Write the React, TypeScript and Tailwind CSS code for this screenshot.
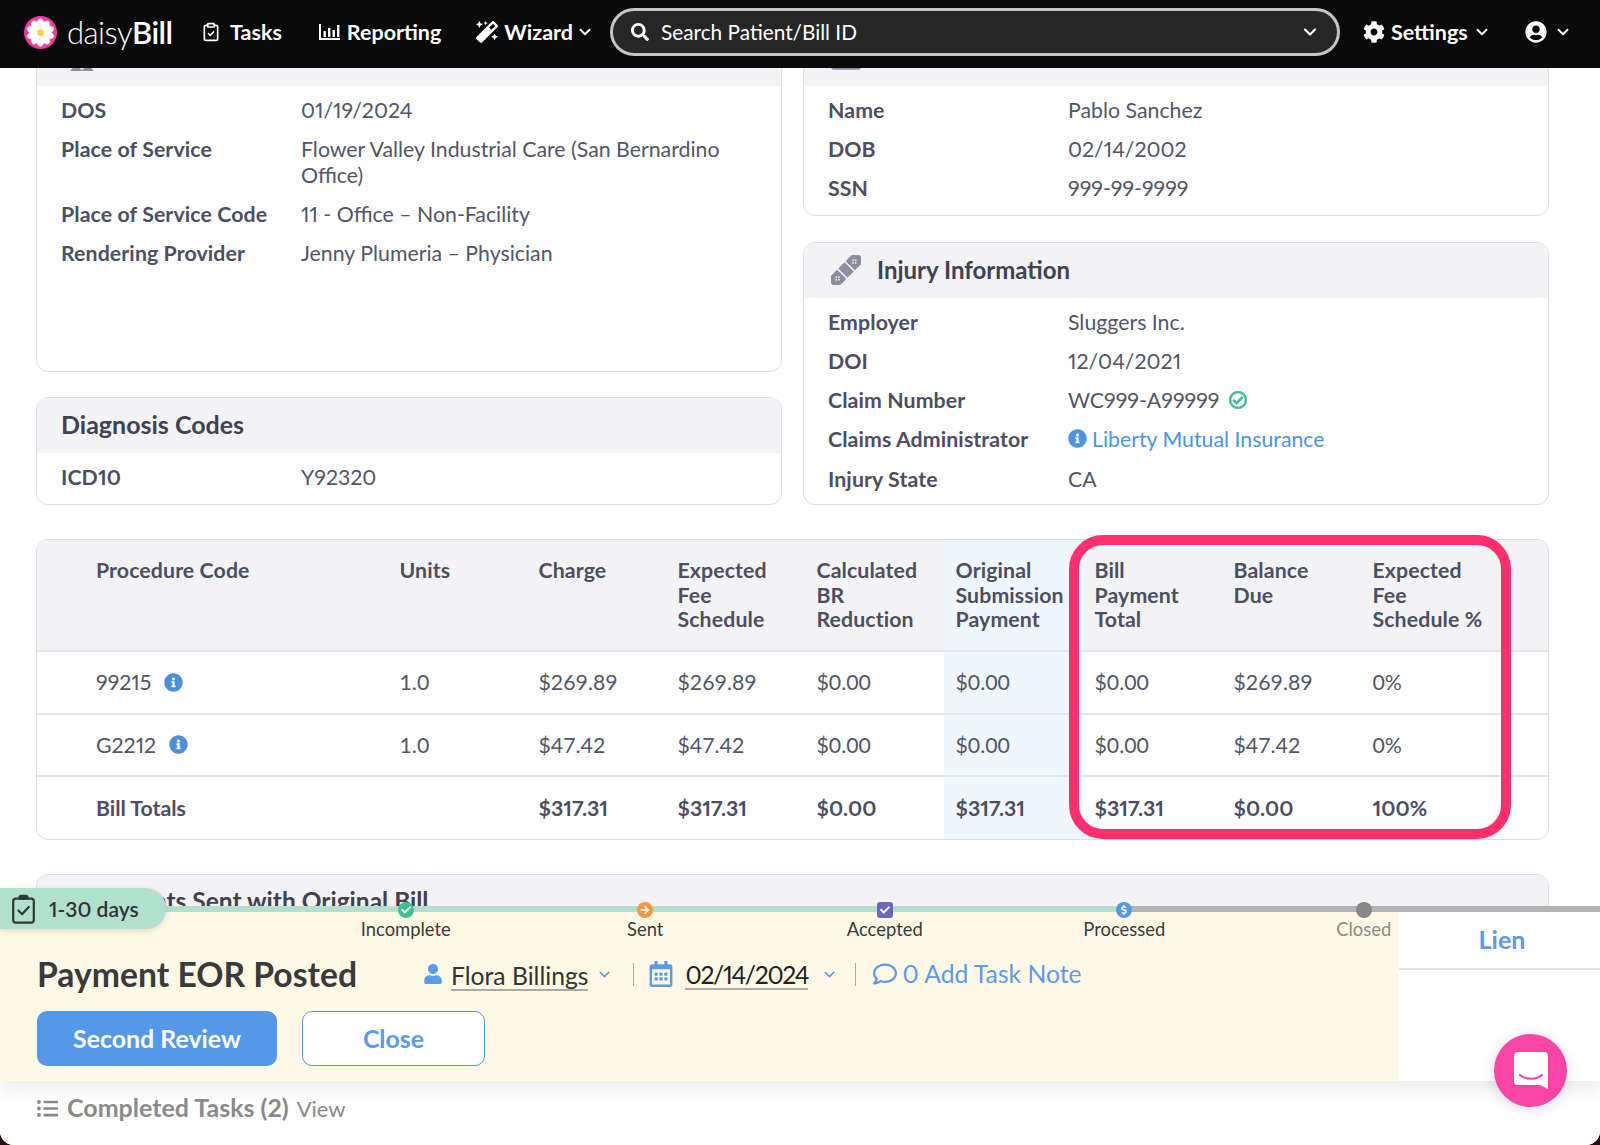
import { ChevronDown, ClipboardCheck } from "lucide-react";
import {
  FaArrowRight,
  FaCheck,
  FaCog,
  FaDollarSign,
  FaHospital,
  FaIdCard,
  FaInfoCircle,
  FaListUl,
  FaMagic,
  FaRegCalendarAlt,
  FaRegCheckCircle,
  FaRegComment,
  FaSearch,
  FaUser,
  FaUserCircle,
} from "react-icons/fa";
import type { ReactNode } from "react";

function Flower() {
  const petals = [0, 36, 72, 108, 144, 180, 216, 252, 288, 324];
  return (
    <svg width="33" height="33" viewBox="0 0 33 33" className="shrink-0">
      <circle cx="16.5" cy="16.5" r="16.5" fill="#f5399d" />
      {petals.map((deg) => (
        <ellipse key={deg} cx="16.5" cy="8.6" rx="3.7" ry="6" fill="#fff" stroke="#fbd5e8" strokeWidth="0.5" transform={`rotate(${deg} 16.5 16.5)`} />
      ))}
      <circle cx="16.5" cy="16.5" r="3.2" fill="#fbd32d" />
    </svg>
  );
}

function ReportIcon() {
  return (
    <svg width="21" height="18" viewBox="0 0 21 18" fill="#fff" className="shrink-0">
      <rect x="0" y="1" width="2" height="16" />
      <rect x="0" y="15" width="21" height="2" />
      <rect x="4.5" y="8" width="2.4" height="6" />
      <rect x="9" y="5" width="2.4" height="9" />
      <rect x="13.5" y="7" width="2.4" height="7" />
      <rect x="18" y="2" width="2.4" height="12" />
    </svg>
  );
}

function BadgeClipboard() {
  return (
    <svg width="23" height="30" viewBox="0 0 23 30" fill="none" stroke="#2f3a36" strokeWidth="2.2" className="shrink-0">
      <rect x="1.2" y="4.6" width="20.6" height="24" rx="2.6" />
      <path d="M7.5 4.6V3.4a1.6 1.6 0 0 1 1.6-1.6h4.8a1.6 1.6 0 0 1 1.6 1.6v1.2z" fill="#2f3a36" />
      <path d="M6.5 16.5l3.6 3.8 6.6-7.4" strokeLinecap="round" strokeLinejoin="round" />
    </svg>
  );
}

function BandageIcon() {
  const dots = [
    [0, 13.2],
    [0, 16.8],
    [-2, 15],
    [2, 15],
  ];
  return (
    <svg width="30" height="30" viewBox="0 0 30 30" className="ml-[3px] shrink-0">
      <g transform="rotate(-45 15 15)">
        <rect x="-5" y="8.5" width="40" height="13" rx="6.5" fill="#8b8e9c" />
        <rect x="9" y="7.5" width="1.6" height="15" fill="#f3f3f6" />
        <rect x="19.4" y="7.5" width="1.6" height="15" fill="#f3f3f6" />
        {dots.map(([dx, y]) => (
          <g key={`${dx}-${y}`} fill="#f3f3f6">
            <circle cx={3 + dx} cy={y} r="0.9" />
            <circle cx={27 + dx} cy={y} r="0.9" />
          </g>
        ))}
      </g>
    </svg>
  );
}

function Chevron({ className }: { className: string }) {
  return <ChevronDown className={className} strokeWidth={2.5} />;
}

function TopNav() {
  return (
    <nav className="relative z-10 flex h-[68px] items-center bg-[#0a0a0a] pb-[4px] pl-[24px] text-[21.5px] font-bold text-white">
      <Flower />
      <span className="ml-[10px] w-[107px] text-[31px] font-light tracking-[-0.5px]">
        daisy<span className="font-semibold">Bill</span>
      </span>
      <ClipboardCheck className="ml-[27px] h-[20px] w-[20px]" />
      <span className="ml-[9px]">Tasks</span>
      <span className="ml-[37px]">
        <ReportIcon />
      </span>
      <span className="ml-[7px]">Reporting</span>
      <FaMagic className="ml-[35px] text-[22px]" />
      <span className="ml-[6px]">Wizard</span>
      <Chevron className="ml-[3px] h-[18px] w-[18px]" />
      <div className="ml-[16px] flex h-[48px] w-[730px] items-center rounded-full border-[3px] border-[#c4c4c4] bg-[#262626] pl-[18px] pr-[17px] font-normal">
        <FaSearch className="text-[18px]" />
        <span className="ml-[12px] flex-1 text-[20.8px]">Search Patient/Bill ID</span>
        <Chevron className="h-[20px] w-[20px]" />
      </div>
      <FaCog className="ml-[23px] text-[22px]" />
      <span className="ml-[6px]">Settings</span>
      <Chevron className="ml-[5px] h-[18px] w-[18px]" />
      <FaUserCircle className="ml-[34px] text-[22px]" />
      <Chevron className="ml-[7px] h-[18px] w-[18px]" />
    </nav>
  );
}

function Card({ title, icon, children, className = "" }: { title?: string; icon?: ReactNode; children: ReactNode; className?: string }) {
  return (
    <section className={`overflow-hidden rounded-[12px] border border-[#dcdde1] bg-white ${className}`}>
      <header className="flex h-[55px] items-center gap-[16px] bg-[#f3f3f6] pb-[2px] pl-[24px] font-bold text-[#3f4250]">
        {icon}
        {title}
      </header>
      <div className="pb-[6px] pt-[4px]">{children}</div>
    </section>
  );
}

function InfoRow({ label, children }: { label: string; children: ReactNode }) {
  return (
    <div className="flex min-h-[39px] items-start px-[24px] py-[6.5px] text-[21.3px] leading-[26px]">
      <div className="w-[240px] shrink-0 font-bold tracking-[0.1px] text-[#4c4f5f]">{label}</div>
      <div className="text-[#535665]">{children}</div>
    </div>
  );
}

const cols = [
  { title: ["Units"] },
  { title: ["Charge"] },
  { title: ["Expected", "Fee", "Schedule"] },
  { title: ["Calculated", "BR", "Reduction"] },
  { title: ["Original", "Submission", "Payment"] },
  { title: ["Bill", "Payment", "Total"] },
  { title: ["Balance", "Due"] },
  { title: ["Expected", "Fee", "Schedule %"] },
];

const rows = [
  { code: "99215", cells: ["1.0", "$269.89", "$269.89", "$0.00", "$0.00", "$0.00", "$269.89", "0%"] },
  { code: "G2212", cells: ["1.0", "$47.42", "$47.42", "$0.00", "$0.00", "$0.00", "$47.42", "0%"] },
  { code: "Bill Totals", cells: ["", "$317.31", "$317.31", "$0.00", "$317.31", "$317.31", "$0.00", "100%"] },
];

function ProcedureTable() {
  return (
    <div className="relative mt-[34px]">
      <div className="overflow-hidden rounded-[12px] border border-[#dcdde1] bg-white">
        <table className="w-full table-fixed text-left text-[21.3px] leading-[24.5px]">
          <thead>
            <tr className="h-[111px] bg-[#f3f3f6] align-top text-[#4c4f5f]">
              <th className="w-[350.5px] pl-[59px] pt-[18px] font-bold tracking-[0.1px]">Procedure Code</th>
              {cols.map((col, i) => (
                <th key={i} className={`w-[139px] whitespace-nowrap pl-[12px] pt-[18px] font-bold tracking-[0.1px] ${i === 4 ? "bg-[#eff7fe]" : ""}`}>
                  {col.title.map((line) => (
                    <div key={line}>{line}</div>
                  ))}
                </th>
              ))}
              <th />
            </tr>
          </thead>
          <tbody className="text-[#535665]">
            {rows.map((row, r) => (
              <tr key={row.code} className={`h-[62.5px] border-t-[2px] border-[#e4e5e8] ${r === 2 ? "font-bold text-[#4c4f5f]" : ""}`}>
                <td className="pl-[59px]">
                  <span className="inline-flex items-center gap-[13px]">
                    {row.code}
                    {r < 2 && <FaInfoCircle className="text-[19px] text-[#4c8fdc]" />}
                  </span>
                </td>
                {row.cells.map((cell, i) => (
                  <td key={i} className={`pl-[12px] ${r < 2 ? "tabular-nums" : ""} ${i === 4 ? "bg-[#eff7fe]" : ""}`}>
                    {cell}
                  </td>
                ))}
                <td />
              </tr>
            ))}
          </tbody>
        </table>
      </div>
      {/* pink highlight drawn over the last three columns */}
      <div className="pointer-events-none absolute left-[1033px] top-[-4px] h-[304px] w-[442px] rounded-[34px] border-[10px] border-[#ff2e6c]" />
    </div>
  );
}

function StepDot({ children, className }: { children?: ReactNode; className: string }) {
  return <div className={`flex h-[16px] w-[16px] items-center justify-center text-[10px] text-white ${className}`}>{children}</div>;
}

const steps = [
  { label: "Incomplete", dot: <StepDot className="rounded-full bg-[#3cc08f]"><FaCheck /></StepDot> },
  { label: "Sent", dot: <StepDot className="rounded-full bg-[#f59a3c]"><FaArrowRight /></StepDot> },
  { label: "Accepted", dot: <StepDot className="rounded-[3px] bg-[#6d65c0]"><FaCheck /></StepDot> },
  { label: "Processed", dot: <StepDot className="rounded-full bg-[#5498e8]"><FaDollarSign /></StepDot> },
  { label: "Closed", dot: <StepDot className="rounded-full bg-[#888888]" />, muted: true },
];

function TaskFooter() {
  return (
    <div className="absolute inset-x-0 bottom-0 z-20 h-[239px] bg-white">
      {/* progress track */}
      <div className="flex h-[6px]">
        <div className="w-[1125px] bg-[#b2e0cf]" />
        <div className="flex-1 bg-[#b3b3b3]" />
      </div>

      <div className="flex h-[169px] shadow-[0_8px_16px_rgba(0,0,0,0.08)]">
        <div className="w-[1399px] bg-[#fef9e5] pl-[37px] pt-[38px]">
          <div className="flex h-[48px] items-center text-[24.7px]">
            <h2 className="w-[386px] text-[33.7px] font-bold text-[#3a3a3a]">Payment EOR Posted</h2>
            <FaUser className="text-[20px] text-[#5b9bea]" />
            <span className="ml-[8px] mt-[4px] border-b-[2px] border-[#aaaaaa] leading-[27px] text-[#333333]">Flora Billings</span>
            <ChevronDown className="ml-[8px] h-[17px] w-[17px] text-[#5b9bea]" />
            <div className="ml-[20px] h-[23px] w-px bg-[#aaaaaa]" />
            <FaRegCalendarAlt className="ml-[14px] text-[26px] text-[#5b9bea]" />
            <span className="ml-[11px] mt-[2px] w-[123px] whitespace-nowrap border-b-[2px] border-[#aaaaaa] leading-[27px] tracking-[-1.3px] text-[#222222]">02/14/2024</span>
            <ChevronDown className="ml-[13px] h-[17px] w-[17px] text-[#5b9bea]" />
            <div className="ml-[17px] h-[23px] w-px bg-[#aaaaaa]" />
            <FaRegComment className="ml-[17px] text-[24px] text-[#5b9bea]" />
            <span className="ml-[5px] text-[#5b9bea]">0 Add Task Note</span>
          </div>
          <div className="mt-[13px] flex gap-[25px] text-[24.9px] font-bold">
            <button className="h-[55px] w-[240px] rounded-[10px] bg-[#5498e8] text-white">Second Review</button>
            <button className="h-[55px] w-[183px] rounded-[10px] border-[1.5px] border-[#5498e8] bg-white text-[#5b9bea]">Close</button>
          </div>
        </div>
        <div className="flex-1">
          <div className="flex h-[58px] items-center justify-center border-b-[2px] border-[#e2e2e2] pl-[5px] text-[25px] font-bold text-[#5b9bea]">
            Lien
          </div>
        </div>
      </div>

      <div className="flex h-[54px] items-center pl-[37px] text-[#8a8a8a]">
        <FaListUl className="text-[21px]" />
        <span className="ml-[9px] text-[25px] font-bold">Completed Tasks (2)</span>
        <span className="ml-[8px] text-[22px]">View</span>
      </div>

      {/* steps sit on the track */}
      <div className="absolute left-[286px] top-[-4px] flex">
        {steps.map((step) => (
          <div key={step.label} className="flex w-[239.5px] flex-col items-center">
            {step.dot}
            <span className={`-mt-[1px] whitespace-nowrap text-[18.4px] leading-[24px] ${step.muted ? "text-[#8a8a8a]" : "text-[#3a3a3a]"}`}>
              {step.label}
            </span>
          </div>
        ))}
      </div>

      {/* days badge */}
      <div className="absolute left-0 top-[-18px] flex h-[41px] w-[166px] items-center rounded-r-[20px] bg-[#b2e0cf] pl-[12px] text-[21px] font-semibold text-[#333333] shadow-[0_2px_6px_rgba(0,0,0,0.12)]">
        <BadgeClipboard />
        <span className="ml-[14px]">1-30 days</span>
      </div>
    </div>
  );
}

function ChatBubble() {
  return (
    <div className="absolute bottom-[38px] right-[33px] z-30 flex h-[73px] w-[73px] items-center justify-center rounded-full bg-[#f945a5] shadow-[0_2px_14px_rgba(0,0,0,0.15)]">
      <svg width="34" height="37" viewBox="0 0 34 37">
        <path d="M4 0h26a4 4 0 0 1 4 4v33l-8-4H4a4 4 0 0 1-4-4V4a4 4 0 0 1 4-4z" fill="#fff" />
        <path d="M6 23c6 5 16 5 22 0" fill="none" stroke="#f945a5" strokeWidth="2.2" strokeLinecap="round" />
      </svg>
    </div>
  );
}

export default function App() {
  return (
    <div className="h-[1145px] w-[1600px] overflow-hidden bg-[#2a0a10] font-['Lato',sans-serif] proportional-nums">
      <div className="relative h-full overflow-hidden rounded-b-[14px] bg-white">
        <TopNav />
        <main className="-mt-[38px] pl-[36px] pr-[51px]">
          <div className="grid grid-cols-2 gap-x-[21px]">
            <div className="flex flex-col gap-[25px]">
              <Card className="h-[342px]" icon={<FaHospital className="ml-[8px] text-[26px] text-[#8b8e9c]" />}>
                <InfoRow label="DOS">01/19/2024</InfoRow>
                <InfoRow label="Place of Service">Flower Valley Industrial Care (San Bernardino Office)</InfoRow>
                <InfoRow label="Place of Service Code">11 - Office – Non-Facility</InfoRow>
                <InfoRow label="Rendering Provider">Jenny Plumeria – Physician</InfoRow>
              </Card>
              <Card className="flex-1 text-[25px]" title="Diagnosis Codes">
                <InfoRow label="ICD10">Y92320</InfoRow>
              </Card>
            </div>
            <div className="flex flex-col gap-[26px]">
              <Card className="h-[186px]" icon={<FaIdCard className="ml-[3px] text-[30px] text-[#8b8e9c]" />}>
                <InfoRow label="Name">Pablo Sanchez</InfoRow>
                <InfoRow label="DOB">02/14/2002</InfoRow>
                <InfoRow label="SSN">999-99-9999</InfoRow>
              </Card>
              <Card className="h-[263px] text-[24px]" title="Injury Information" icon={<BandageIcon />}>
                <InfoRow label="Employer">Sluggers Inc.</InfoRow>
                <InfoRow label="DOI">12/04/2021</InfoRow>
                <InfoRow label="Claim Number">
                  <span className="inline-flex items-center gap-[10px]">
                    WC999-A99999
                    <FaRegCheckCircle className="text-[18px] text-[#3cc08f]" stroke="currentColor" strokeWidth={24} />
                  </span>
                </InfoRow>
                <InfoRow label="Claims Administrator">
                  <span className="inline-flex items-center gap-[5px] text-[#4c94e4]">
                    <FaInfoCircle className="text-[19px]" />
                    Liberty Mutual Insurance
                  </span>
                </InfoRow>
                <InfoRow label="Injury State">CA</InfoRow>
              </Card>
            </div>
          </div>
          <ProcedureTable />
          <Card className="mt-[34px] text-[24.5px]" title="Documents Sent with Original Bill">
            <div className="h-[120px]" />
          </Card>
        </main>
        <TaskFooter />
        <ChatBubble />
      </div>
    </div>
  );
}
